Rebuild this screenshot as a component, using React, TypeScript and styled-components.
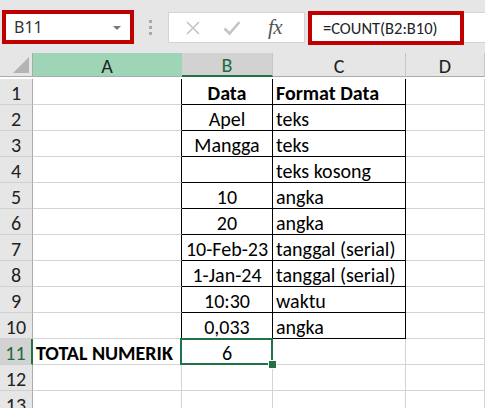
import styled, { createGlobalStyle } from 'styled-components';

const GlobalStyle = createGlobalStyle`
  html, body {
    margin: 0;
    padding: 0;
    background: #ffffff;
    overflow: hidden;
  }
  * {
    box-sizing: border-box;
  }
`;

const FONT = `Carlito, Lato, "Liberation Sans", sans-serif`;
const GREEN = '#217346';
const RED = '#c00000';

const Page = styled.div`
  width: 485px;
  height: 408px;
  overflow: hidden;
  font-family: ${FONT};
  color: #000;
`;

const Toolbar = styled.div`
  display: flex;
  align-items: flex-start;
  height: 53px;
  padding: 10px 0 0 2px;
  background: #e6e6e6;
`;

const NameBox = styled.div`
  display: flex;
  align-items: center;
  justify-content: space-between;
  width: 132px;
  height: 34px;
  padding: 0 9px 0 8px;
  background: #fff;
  border: 4px solid ${RED};
  font-family: "Noto Sans", "Open Sans", sans-serif;
  font-size: 16px;
  color: #333;
`;

const DropArrow = styled.span`
  width: 0;
  height: 0;
  margin-top: 2px;
  border-left: 4px solid transparent;
  border-right: 4px solid transparent;
  border-top: 4px solid #777;
`;

const Grip = styled.div`
  display: flex;
  flex-direction: column;
  gap: 3px;
  margin: 10px 16px 0 15px;
`;

const GripDot = styled.span`
  width: 3px;
  height: 3px;
  background: #a8a8a8;
`;

const FxBox = styled.div`
  display: flex;
  align-items: center;
  width: 137px;
  height: 31px;
  margin-top: 2px;
  padding: 0 0 0 15px;
  background: #fff;
  border: 1px solid #d4d4d4;
`;

const IconSlot = styled.div<{ $w: number }>`
  display: flex;
  align-items: center;
  justify-content: center;
  width: ${(p) => p.$w}px;
  height: 100%;
`;

const FxText = styled.span`
  font-family: "Liberation Serif", "DejaVu Serif", serif;
  font-style: italic;
  font-size: 21px;
  color: #555;
  letter-spacing: -0.5px;
`;

const FormulaField = styled.div`
  flex: 1;
  display: flex;
  height: 31px;
  margin: 2px 0 0 3px;
  background: #fff;
  border-top: 1px solid #d4d4d4;
  border-bottom: 1px solid #d4d4d4;
`;

const FormulaHighlight = styled.div`
  display: flex;
  align-items: center;
  width: 156px;
  height: 34px;
  margin-top: -2px;
  padding-left: 11px;
  border: 4px solid ${RED};
  background: #fff;
  font-size: 16.5px;
  color: #222;
  white-space: nowrap;
`;

const Sheet = styled.div`
  display: grid;
  grid-template-columns: 33px 149px 91px 133px 79px;
  grid-auto-rows: 26px;
`;

const Corner = styled.div`
  height: 24px;
  background: #e6e6e6;
  border-right: 1px solid #ababab;
  border-bottom: 1px solid #ababab;
  position: relative;
  &::after {
    content: '';
    position: absolute;
    right: 3px;
    bottom: 3px;
    width: 0;
    height: 0;
    border-left: 16px solid transparent;
    border-bottom: 16px solid #b4b4b4;
  }
`;

const ColHead = styled.div<{ $mode?: 'green' | 'sel' }>`
  display: flex;
  align-items: center;
  justify-content: center;
  height: 24px;
  padding-top: 2px;
  font-size: 20px;
  background: ${(p) => (p.$mode === 'green' ? '#9fd5b7' : p.$mode === 'sel' ? '#d2d2d2' : '#e6e6e6')};
  color: ${(p) => (p.$mode === 'sel' ? '#1e6b41' : '#222')};
  border-right: 1px solid ${(p) => (p.$mode === 'green' ? '#9fd5b7' : '#c6c6c6')};
  border-bottom: ${(p) => (p.$mode === 'sel' ? `2px solid ${GREEN}` : '1px solid #ababab')};
`;

const RowHead = styled.div<{ $sel?: boolean }>`
  display: flex;
  align-items: center;
  justify-content: center;
  padding-top: 2px;
  font-size: 20px;
  background: ${(p) => (p.$sel ? '#d2d2d2' : '#e6e6e6')};
  color: ${(p) => (p.$sel ? '#1e6b41' : '#222')};
  border-right: ${(p) => (p.$sel ? `2px solid ${GREEN}` : '1px solid #ababab')};
  border-bottom: 1px solid #d0d0d0;
`;

const Cell = styled.div<{
  $align?: 'center' | 'left';
  $bold?: boolean;
  $right?: boolean;
  $bottom?: boolean;
}>`
  display: flex;
  align-items: center;
  justify-content: ${(p) => (p.$align === 'center' ? 'center' : 'flex-start')};
  padding: 2px 0 0 ${(p) => (p.$align === 'center' ? 0 : 3)}px;
  font-size: 20px;
  font-weight: ${(p) => (p.$bold ? 700 : 400)};
  white-space: nowrap;
  overflow: visible;
  border-right: 1px solid ${(p) => (p.$right ? '#000' : '#d4d4d4')};
  border-bottom: 1px solid ${(p) => (p.$bottom ? '#000' : '#d4d4d4')};
`;

const SelectedCell = styled(Cell)`
  position: relative;
  &::before {
    content: '';
    position: absolute;
    left: -2px;
    top: -1px;
    right: -1px;
    bottom: -1px;
    border: 2px solid ${GREEN};
    pointer-events: none;
  }
  &::after {
    content: '';
    position: absolute;
    right: -5px;
    bottom: -5px;
    width: 7px;
    height: 7px;
    background: ${GREEN};
    border: 1px solid #fff;
  }
`;

type Row = { a?: string; b?: string; c?: string; bold?: boolean; aBold?: boolean };

const rows: Row[] = [
  { b: 'Data', c: 'Format Data', bold: true },
  { b: 'Apel', c: 'teks' },
  { b: 'Mangga', c: 'teks' },
  { b: '', c: 'teks kosong' },
  { b: '10', c: 'angka' },
  { b: '20', c: 'angka' },
  { b: '10-Feb-23', c: 'tanggal (serial)' },
  { b: '1-Jan-24', c: 'tanggal (serial)' },
  { b: '10:30', c: 'waktu' },
  { b: '0,033', c: 'angka' },
  { a: 'TOTAL NUMERIK', b: '6', aBold: true },
  {},
  {},
];

function CrossIcon() {
  return (
    <svg width="16" height="16" viewBox="0 0 16 16">
      <path d="M2 2 L14 14 M14 2 L2 14" stroke="#c4c4c4" strokeWidth="1.6" fill="none" />
    </svg>
  );
}

function CheckIcon() {
  return (
    <svg width="18" height="16" viewBox="0 0 18 16">
      <path d="M1.5 8.5 L6.5 13.5 L16.5 2" stroke="#c4c4c4" strokeWidth="2.6" fill="none" />
    </svg>
  );
}

export default function App() {
  return (
    <Page>
      <GlobalStyle />
      <Toolbar>
        <NameBox>
          <span>B11</span>
          <DropArrow />
        </NameBox>
        <Grip>
          <GripDot />
          <GripDot />
          <GripDot />
        </Grip>
        <FxBox>
          <IconSlot $w={17}>
            <CrossIcon />
          </IconSlot>
          <IconSlot $w={62}>
            <CheckIcon />
          </IconSlot>
          <IconSlot $w={24}>
            <FxText>fx</FxText>
          </IconSlot>
        </FxBox>
        <FormulaField>
          <FormulaHighlight>=COUNT(B2:B10)</FormulaHighlight>
        </FormulaField>
      </Toolbar>
      <Sheet>
        <Corner />
        <ColHead $mode="green">A</ColHead>
        <ColHead $mode="sel">B</ColHead>
        <ColHead>C</ColHead>
        <ColHead>D</ColHead>
        {rows.map((r, i) => {
          const inTable = i < 10;
          const n = i + 1;
          return [
            <RowHead key={`h${n}`} $sel={n === 11}>
              {n}
            </RowHead>,
            <Cell key={`a${n}`} $bold={r.aBold} $right={inTable}>
              {r.a}
            </Cell>,
            n === 11 ? (
              <SelectedCell key={`b${n}`} $align="center">
                {r.b}
              </SelectedCell>
            ) : (
              <Cell key={`b${n}`} $align="center" $bold={r.bold} $right={inTable} $bottom={inTable}>
                {r.b}
              </Cell>
            ),
            <Cell key={`c${n}`} $bold={r.bold} $right={inTable} $bottom={inTable}>
              {r.c}
            </Cell>,
            <Cell key={`d${n}`} />,
          ];
        })}
      </Sheet>
    </Page>
  );
}
